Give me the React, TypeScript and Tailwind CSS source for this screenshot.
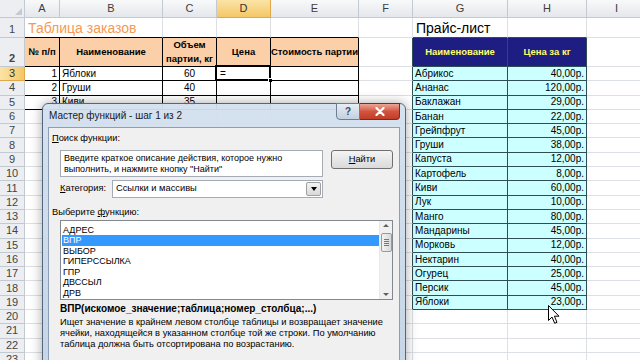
import React from "react";

const cols = ["A", "B", "C", "D", "E", "F", "G", "H", "I"];
const widths = [
  "w-[35px]",
  "w-[103px]",
  "w-[54px]",
  "w-[54px]",
  "w-[88px]",
  "w-[54px]",
  "w-[95px]",
  "w-[79px]",
  "w-[60px]",
];

const orders = [
  { n: 1, name: "Яблоки", vol: 60 },
  { n: 2, name: "Груши", vol: 40 },
  { n: 3, name: "Киви", vol: 35 },
];

const prices: [string, string][] = [
  ["Абрикос", "40,00р."],
  ["Ананас", "120,00р."],
  ["Баклажан", "29,00р."],
  ["Банан", "22,00р."],
  ["Грейпфрут", "45,00р."],
  ["Груши", "38,00р."],
  ["Капуста", "12,00р."],
  ["Картофель", "8,00р."],
  ["Киви", "60,00р."],
  ["Лук", "10,00р."],
  ["Манго", "80,00р."],
  ["Мандарины", "45,00р."],
  ["Морковь", "12,00р."],
  ["Нектарин", "40,00р."],
  ["Огурец", "25,00р."],
  ["Персик", "45,00р."],
  ["Яблоки", "23,00р."],
];

const funcs = ["АДРЕС", "ВПР", "ВЫБОР", "ГИПЕРССЫЛКА", "ГПР", "ДВССЫЛ", "ДРВ"];

const GR = "border-r-[#dcdfe3]";
const GB = "border-b-[#dcdfe3]";

type CellProps = {
  w: string;
  r?: string;
  b?: string;
  className?: string;
  children?: React.ReactNode;
};

function Cell({ w, r = GR, b = GB, className = "", children }: CellProps) {
  return (
    <div
      className={`${w} ${r} ${b} relative h-full shrink-0 border-r border-b flex items-center whitespace-nowrap ${className}`}
    >
      {children}
    </div>
  );
}

function RowHead({
  n,
  hl = false,
  className = "items-center",
}: {
  n: number;
  hl?: boolean;
  className?: string;
}) {
  return (
    <div
      className={`w-[25px] h-full shrink-0 border-r border-b flex justify-center text-[11px] leading-none ${className} ${
        hl
          ? "bg-linear-to-r from-[#fbe4a6] to-[#f3c766] border-[#e1a84a] text-[#333]"
          : "bg-[#eceef1] border-[#c3c9d1] text-[#444]"
      }`}
    >
      {n}
    </div>
  );
}

function Sheet() {
  return (
    <div className="flex flex-col">
      {/* column letters */}
      <div className="flex h-[18px] shrink-0">
        <div className="w-[25px] h-full shrink-0 border-r border-b border-[#c3c9d1] bg-[#eceef1] flex items-end justify-end p-[2px]">
          <div className="w-0 h-0 border-l-[7px] border-l-transparent border-b-[7px] border-b-[#c6cbd2]" />
        </div>
        {cols.map((c, i) => (
          <div
            key={c}
            className={`${widths[i]} h-full shrink-0 border-r border-b flex items-center justify-center text-[11px] ${
              c === "D"
                ? "bg-linear-to-b from-[#fbe4a6] to-[#f3c766] border-[#e1a84a] text-[#333]"
                : "bg-linear-to-b from-[#f8f9fa] to-[#e4e7eb] border-[#c3c9d1] text-[#3d3d3d]"
            }`}
          >
            {c}
          </div>
        ))}
      </div>

      {/* row 1: titles */}
      <div className="flex h-[20px] shrink-0">
        <RowHead n={1} className="items-end pb-[2px]" />
        <Cell w="w-[138px]" b="border-b-black" className="items-end pl-[3px]">
          <span className="text-[14px] leading-[18px] text-[#f59a55]">Таблица заказов</span>
        </Cell>
        <Cell w="w-[54px]" b="border-b-black" />
        <Cell w="w-[54px]" b="border-b-black" />
        <Cell w="w-[88px]" b="border-b-black" />
        <Cell w="w-[54px]" />
        <Cell w="w-[95px]" b="border-b-[#2e4d55]" className="items-end pl-[3px]">
          <span className="text-[14px] leading-[18px]">Прайс-лист</span>
        </Cell>
        <Cell w="w-[79px]" b="border-b-[#2e4d55]" />
        <Cell w="w-[60px]" />
      </div>

      {/* row 2: table headers */}
      <div className="flex h-[29px] shrink-0 text-[9.5px] font-bold leading-[14px]">
        <RowHead n={2} className="items-end pb-[2px]" />
        <Cell w="w-[35px]" r="border-r-black" b="border-b-black" className="justify-center bg-[#fbd0a8]">
          № п/п
        </Cell>
        <Cell w="w-[103px]" r="border-r-black" b="border-b-black" className="justify-center bg-[#fbd0a8]">
          Наименование
        </Cell>
        <Cell w="w-[54px]" r="border-r-black" b="border-b-black" className="justify-center bg-[#fbd0a8] text-center">
          <div>
            Объем
            <br />
            партии, кг
          </div>
        </Cell>
        <Cell w="w-[54px]" r="border-r-black" b="border-b-black" className="justify-center bg-[#fbd0a8]">
          Цена
        </Cell>
        <Cell w="w-[88px]" r="border-r-black" b="border-b-black" className="justify-center bg-[#fbd0a8]">
          Стоимость партии
        </Cell>
        <Cell w="w-[54px]" r="border-r-[#2e4d55]" />
        <Cell w="w-[95px]" r="border-r-[#2e4d55]" b="border-b-[#2e4d55]" className="justify-center bg-[#1e1e82] text-[#ffff66]">
          Наименование
        </Cell>
        <Cell w="w-[79px]" r="border-r-[#2e4d55]" b="border-b-[#2e4d55]" className="justify-center bg-[#1e1e82] text-[#ffff66]">
          Цена за кг
        </Cell>
        <Cell w="w-[60px]" />
      </div>

      {/* data rows */}
      {Array.from({ length: 21 }, (_, i) => {
        const r = i + 3;
        const o = orders[i];
        const p = prices[i];
        const oR = o ? "border-r-black" : GR;
        const oB = o ? "border-b-black" : GB;
        const pR = p ? "border-r-[#2e4d55]" : GR;
        const pB = p ? "border-b-[#2e4d55]" : GB;
        const pBg = p ? "bg-[#ccffff]" : "";
        return (
          <div key={r} className="flex h-[14.3px] shrink-0 text-[10px] leading-none">
            <RowHead n={r} hl={r === 3} />
            <Cell w="w-[35px]" r={oR} b={oB} className="justify-end pr-[2px]">
              {o?.n}
            </Cell>
            <Cell w="w-[103px]" r={oR} b={oB} className="pl-[2px]">
              {o?.name}
            </Cell>
            <Cell w="w-[54px]" r={oR} b={oB} className="justify-center">
              {o?.vol}
            </Cell>
            <Cell w="w-[54px]" r={oR} b={oB} className="pl-[3px]">
              {r === 3 && (
                <>
                  =
                  <div className="absolute -left-[2px] -top-[2px] -right-px -bottom-px border-2 border-black" />
                  <div className="absolute -right-[3px] -bottom-[3px] w-[5px] h-[5px] bg-black border border-white" />
                </>
              )}
            </Cell>
            <Cell w="w-[88px]" r={oR} b={oB} />
            <Cell w="w-[54px]" r={p ? "border-r-[#2e4d55]" : GR} />
            <Cell w="w-[95px]" r={pR} b={pB} className={`pl-[2px] ${pBg}`}>
              {p?.[0]}
            </Cell>
            <Cell w="w-[79px]" r={pR} b={pB} className={`justify-end pr-[2px] ${pBg}`}>
              {p?.[1]}
            </Cell>
            <Cell w="w-[60px]" />
          </div>
        );
      })}
    </div>
  );
}

function FunctionWizard() {
  return (
    <div className="absolute left-[42px] top-[103px] w-[364px] h-[280px] rounded-t-[6px] border border-[#54667d] bg-linear-to-b from-[#d3e0ee]/95 to-[#c2d3e6]/95 px-[5px] shadow-[0_0_12px_rgba(0,0,0,0.35)]">
      <div className="h-[23px] flex items-center pl-px text-[10px] text-[#1a1a1a]">
        Мастер функций - шаг 1 из 2
      </div>

      {/* caption buttons */}
      <div className="absolute -top-px right-[5px] flex">
        <div className="w-[24px] h-[17px] rounded-bl-[4px] border border-[#6d7d92] bg-linear-to-b from-[#e6edf5] to-[#c3d0df] flex items-center justify-center text-[10px] font-bold text-[#3a4a60]">
          ?
        </div>
        <div className="w-[40px] h-[17px] rounded-br-[4px] border border-l-0 border-[#7a2a22] bg-linear-to-b from-[#eba697] via-[#d2543f] to-[#c23c28] flex items-center justify-center">
          <svg width="10" height="9" viewBox="0 0 10 9">
            <path d="M1.5 1 L8.5 8 M8.5 1 L1.5 8" stroke="#fff" strokeWidth="2.2" strokeLinecap="round" />
          </svg>
        </div>
      </div>

      {/* client area */}
      <div className="h-[300px] border border-[#8c9fb6] bg-[#f0f0f0] pl-[3px] pt-[4px] text-[9.3px] text-black">
        <div className="h-[12px] leading-[12px]">
          <span className="underline">П</span>оиск функции:
        </div>

        <div className="mt-[6px] ml-[8px] flex items-start gap-[8px]">
          <div className="w-[263px] h-[27px] bg-white border border-[#a5acb5] px-[3px] pt-[2px] leading-[11px] text-[9px]">
            <div>Введите краткое описание действия, которое нужно</div>
            <div>выполнить, и нажмите кнопку "Найти"</div>
          </div>
          <div className="w-[62px] h-[19px] rounded-[3px] border border-[#707070] bg-linear-to-b from-[#f4f4f4] to-[#dadada] flex items-center justify-center">
            <span>
              <span className="underline">Н</span>айти
            </span>
          </div>
        </div>

        <div className="mt-[3px] ml-[8px] flex items-center h-[18px]">
          <span className="w-[52px]">
            <span className="underline">К</span>атегория:
          </span>
          <div className="w-[211px] h-[18px] bg-white border border-[#a5acb5] flex items-center justify-between pl-[3px] pr-px">
            <span>Ссылки и массивы</span>
            <div className="w-[15px] h-[14px] border border-[#a0a0a0] rounded-[2px] bg-linear-to-b from-[#f4f4f4] to-[#d8d8d8] flex items-center justify-center">
              <div className="w-0 h-0 border-l-[3.5px] border-r-[3.5px] border-t-[4px] border-l-transparent border-r-transparent border-t-black" />
            </div>
          </div>
        </div>

        <div className="mt-[8px] h-[12px] leading-[12px]">
          Выберите <span className="underline">ф</span>ункцию:
        </div>

        <div className="mt-[2px] ml-[8px] w-[333px] h-[80px] bg-white border border-[#828790] flex overflow-hidden">
          <div className="flex-1 pt-[3.5px] text-[9px] leading-[10.6px]">
            {funcs.map((f) => (
              <div
                key={f}
                className={`h-[10.6px] ml-px pl-px ${f === "ВПР" ? "bg-[#3399ff] text-white" : ""}`}
              >
                {f}
              </div>
            ))}
          </div>
          <div className="w-[13px] h-full bg-[#f0f0f0] border-l border-[#e8e8e8] flex flex-col items-center pt-[3px] pb-[3px]">
            <div className="w-0 h-0 border-l-[3px] border-r-[3px] border-b-[3px] border-l-transparent border-r-transparent border-b-[#606060]" />
            <div className="mt-[6px] w-[11px] h-[19px] rounded-[2px] border border-[#9a9a9a] bg-linear-to-r from-[#f2f2f2] to-[#d9d9d9] flex flex-col items-center justify-center gap-px">
              <div className="w-[5px] h-px bg-[#777]" />
              <div className="w-[5px] h-px bg-[#777]" />
              <div className="w-[5px] h-px bg-[#777]" />
              <div className="w-[5px] h-px bg-[#777]" />
            </div>
            <div className="flex-1" />
            <div className="w-0 h-0 border-l-[3px] border-r-[3px] border-t-[3px] border-l-transparent border-r-transparent border-t-[#606060]" />
          </div>
        </div>

        <div className="mt-[3px] ml-[8px] h-[12px] leading-[12px] font-bold text-[10px]">
          ВПР(искомое_значение;таблица;номер_столбца;...)
        </div>
        <div className="mt-[2px] ml-[8px] leading-[11px]">
          <div>Ищет значение в крайнем левом столбце таблицы и возвращает значение</div>
          <div>ячейки, находящейся в указанном столбце той же строки. По умолчанию</div>
          <div>таблица должна быть отсортирована по возрастанию.</div>
        </div>
      </div>
    </div>
  );
}

function Cursor() {
  return (
    <svg className="absolute left-[548px] top-[305px]" width="13" height="20" viewBox="0 0 13 20">
      <path
        d="M0.5 0.5 L0.5 15.5 L4 12 L6.7 18.3 L9 17.3 L6.4 11.2 L11 11.2 Z"
        fill="#fff"
        stroke="#000"
        strokeWidth="1"
        strokeLinejoin="round"
      />
    </svg>
  );
}

export default function App() {
  return (
    <div className="relative w-[640px] h-[360px] overflow-hidden bg-white font-['Liberation_Sans',Arial,sans-serif] text-black select-none">
      <Sheet />
      <FunctionWizard />
      <Cursor />
    </div>
  );
}
